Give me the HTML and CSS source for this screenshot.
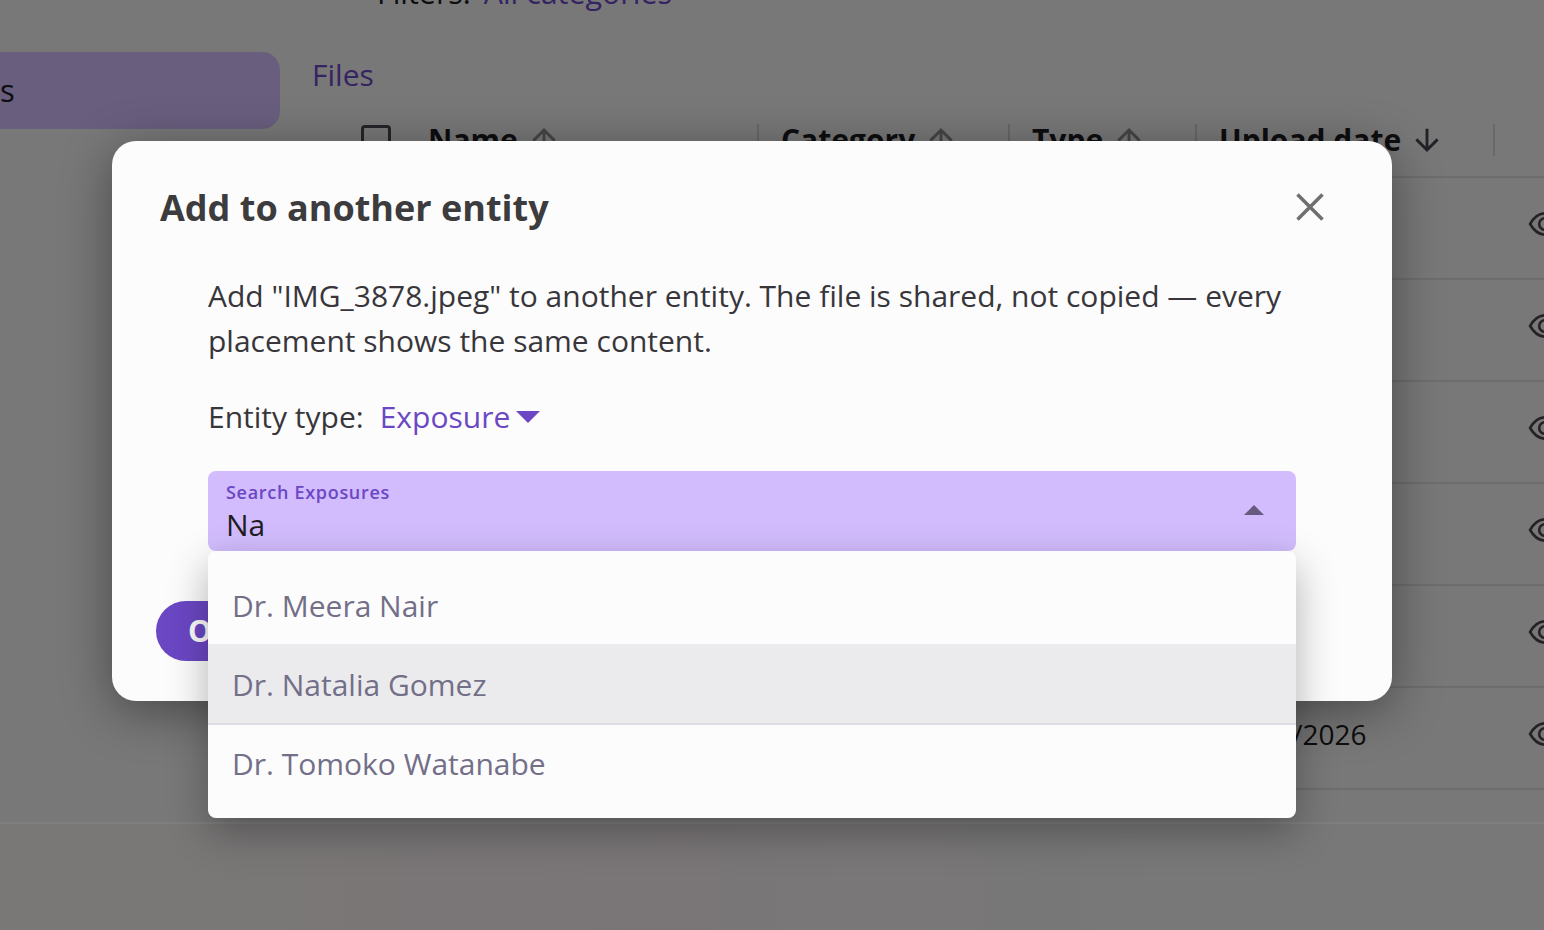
FILE: index.html
```html
<!DOCTYPE html>
<html lang="en">
<head>
<meta charset="utf-8">
<title>Add to another entity</title>
<link rel="stylesheet" href="styles.css">
</head>
<body>
<div class="page">
  <div class="filter-row">Filters: <span class="filter-value">All categories</span></div>
  <div class="main">
    <nav class="side"><div class="nav-item">s</div></nav>
    <section class="content">
      <h2 class="files">Files</h2>
      <div class="thead">
        <div class="cell c-check"><span class="checkbox"></span></div>
        <div class="cell c-name">Name <svg class="sort" viewBox="0 0 24 24"><path d="M12 21V4M3.500 12.500 12 4l8.500 8.500"/></svg></div>
        <div class="cell c-cat">Category <svg class="sort" viewBox="0 0 24 24"><path d="M12 21V4M3.500 12.500 12 4l8.500 8.500"/></svg></div>
        <div class="cell c-type">Type <svg class="sort" viewBox="0 0 24 24"><path d="M12 21V4M3.500 12.500 12 4l8.500 8.500"/></svg></div>
        <div class="cell c-date">Upload date <svg class="sort active" viewBox="0 0 24 24"><path d="M12 3v17M3.500 11.500 12 20l8.500-8.500"/></svg></div>
        <div class="cell c-act"></div>
      </div>
      <div class="row"><span class="date"></span><svg class="eye" viewBox="0 0 32 24"><path d="M2 12C6 5 11 2 16 2s10 3 14 10c-4 7-9 10-14 10S6 19 2 12Z"/><circle cx="16" cy="12" r="5.500"/></svg></div>
      <div class="row"><span class="date"></span><svg class="eye" viewBox="0 0 32 24"><path d="M2 12C6 5 11 2 16 2s10 3 14 10c-4 7-9 10-14 10S6 19 2 12Z"/><circle cx="16" cy="12" r="5.500"/></svg></div>
      <div class="row"><span class="date"></span><svg class="eye" viewBox="0 0 32 24"><path d="M2 12C6 5 11 2 16 2s10 3 14 10c-4 7-9 10-14 10S6 19 2 12Z"/><circle cx="16" cy="12" r="5.500"/></svg></div>
      <div class="row"><span class="date"></span><svg class="eye" viewBox="0 0 32 24"><path d="M2 12C6 5 11 2 16 2s10 3 14 10c-4 7-9 10-14 10S6 19 2 12Z"/><circle cx="16" cy="12" r="5.500"/></svg></div>
      <div class="row"><span class="date"></span><svg class="eye" viewBox="0 0 32 24"><path d="M2 12C6 5 11 2 16 2s10 3 14 10c-4 7-9 10-14 10S6 19 2 12Z"/><circle cx="16" cy="12" r="5.500"/></svg></div>
      <div class="row"><span class="date">02/11/2026</span><svg class="eye" viewBox="0 0 32 24"><path d="M2 12C6 5 11 2 16 2s10 3 14 10c-4 7-9 10-14 10S6 19 2 12Z"/><circle cx="16" cy="12" r="5.500"/></svg></div>
    </section>
  </div>
  <footer class="page-foot"></footer>
</div>

<div class="scrim"></div>

<div class="dialog" role="dialog" aria-label="Add to another entity">
  <header class="dialog-head">
    <h1 class="dialog-title">Add to another entity</h1>
    <svg class="close" viewBox="0 0 28 28"><path d="M1.500 1.500l25 25M26.500 1.500l-25 25"/></svg>
  </header>
  <div class="dialog-body">
    <p class="lead">Add "IMG_3878.jpeg" to another entity. The file is shared, not copied — every placement shows the same content.</p>
    <div class="type-row">
      <span class="type-label">Entity type:</span>
      <span class="type-value">Exposure</span>
      <svg class="type-caret" viewBox="0 0 24 12"><path d="M0 0h24L12 12Z"/></svg>
    </div>
    <div class="combo">
      <div class="field">
        <div class="field-text">
          <span class="field-label">Search Exposures</span>
          <span class="field-value">Na</span>
        </div>
        <svg class="field-caret" viewBox="0 0 20 10"><path d="M0 10 10 0l10 10Z"/></svg>
      </div>
      <ul class="menu">
        <li class="option">Dr. Meera Nair</li>
        <li class="option hovered">Dr. Natalia Gomez</li>
        <li class="option">Dr. Tomoko Watanabe</li>
      </ul>
    </div>
  </div>
  <footer class="dialog-foot"><button class="ok">OK</button></footer>
</div>
</body>
</html>
```
FILE: styles.css
```css
* { box-sizing: border-box; }
html, body { margin: 0; height: 100%; }
body {
  width: 1544px;
  height: 930px;
  overflow: hidden;
  position: relative;
  font-family: "Open Sans", "Noto Sans", sans-serif;
  color: #1c1b1f;
  background: #f0f0f0;
}
.page { height: 930px; overflow: hidden; }
.filter-row {
  height: 36px;
  margin-top: -25px;
  margin-bottom: 41px;
  padding-left: 377px;
  font-size: 30.4px;
  line-height: 36px;
  color: #1c1b1f;
}
.filter-value { color: #6b47c4; margin-left: 5px; }
.main { display: flex; }
.side { width: 280px; flex: none; }
.nav-item {
  height: 77px;
  background: #d2bcfd;
  border-radius: 0 18px 18px 0;
  font-size: 31px;
  line-height: 77px;
}
.content { flex: none; width: 1264px; padding-left: 32px; }
.files {
  margin: 0 0 20px;
  font-size: 30px;
  font-weight: 400;
  line-height: 46px;
  color: #6b47c4;
}
.thead { display: flex; height: 60px; padding-left: 49px; padding-bottom: 15px; align-items: center; border-bottom: 2px solid #dcdbdd; font-weight: 700; font-size: 30px; }
.cell { display: flex; align-items: center; gap: 11px; height: 32px; }
.c-check { width: 67px; }
.checkbox { width: 30px; height: 30px; border: 3px solid #4a4850; border-radius: 4px; }
.c-name { width: 329px; }
.c-cat { width: 251px; border-left: 2px solid #d0cfd2; padding-left: 22px; }
.c-type { width: 187px; border-left: 2px solid #d0cfd2; padding-left: 22px; }
.c-date { width: 300px; border-left: 2px solid #d0cfd2; padding-left: 22px; border-right: 2px solid #d0cfd2; }
.sort { width: 30px; height: 30px; fill: none; stroke: #8c8a90; stroke-width: 2.300; }
.sort.active { stroke: #49454f; }
.row { position: relative; display: flex; align-items: center; justify-content: flex-end; height: 102px; padding-bottom: 8px; border-bottom: 2px solid #dcdbdd; }
.date { position: absolute; left: 906px; top: 26px; font-size: 28px; line-height: 40px; }
.eye { width: 34px; height: 26px; margin-right: -18px; fill: none; stroke: #49454f; stroke-width: 2.500; flex: none; }
.page-foot {
  height: 120px;
  margin-top: 32px;
  border-top: 2px solid #ffffff;
  background: linear-gradient(90deg, #f5eeef 0%, #f4edee 45%, #f0f0f0 75%);
}

.scrim { position: absolute; inset: 0; background: rgba(0,0,0,.5); }

.dialog {
  position: absolute;
  left: 112px;
  top: 141px;
  width: 1280px;
  height: 560px;
  background: #fcfcfc;
  border-radius: 24px;
  box-shadow: 0 10px 50px rgba(0,0,0,.4);
  display: flex;
  flex-direction: column;
}
.dialog-head { display: flex; justify-content: space-between; align-items: center; padding: 39px 68px 0 48px; height: 92px; }
.dialog-title { margin: 3px 0 0; font-size: 36px; font-weight: 700; line-height: 52px; color: #3c3b3d; }
.close { width: 28px; height: 28px; fill: none; stroke: #6f6e70; stroke-width: 3.500; }
.dialog-body { padding: 40px 96px 0; flex: none; }
.lead { margin: 0; font-size: 30px; line-height: 45px; color: #38363a; }
.type-row { display: flex; align-items: center; margin-top: 31px; height: 46px; font-size: 30px; line-height: 46px; }
.type-label { color: #38363a; }
.type-value { color: #6b47c4; margin-left: 16px; }
.type-caret { width: 24px; height: 12px; margin-left: 6px; fill: #6b47c4; }
.combo { position: relative; margin-top: 31px; }
.field {
  height: 80px;
  background: #d2bcfd;
  border-radius: 8px;
  display: flex;
  justify-content: space-between;
  align-items: center;
  padding: 0 32px 0 18px;
}
.field-text { display: flex; flex-direction: column; }
.field-label { font-size: 18px; font-weight: 600; line-height: 26px; letter-spacing: .7px; color: #6b47c4; }
.field-value { font-size: 30px; line-height: 39px; color: #1f1d22; }
.field-caret { width: 20px; height: 10px; margin-bottom: 2px; fill: #665a7e; }
.menu {
  position: absolute;
  top: 80px;
  left: 0;
  right: 0;
  margin: 0;
  padding: 16px 0;
  list-style: none;
  background: #fcfcfc;
  border-radius: 8px;
  box-shadow: 0 14px 40px rgba(0,0,0,.3);
}
.option { height: 77px; padding: 0 24px; font-size: 30px; line-height: 78px; color: #736f88; }
.option.hovered { height: 81px; background: #ebebed; border-bottom: 2px solid #dfdee4; line-height: 81px; }
.dialog-foot { padding: 50px 44px 0; }
.ok {
  width: 160px;
  height: 60px;
  border: 0;
  border-radius: 30px;
  background: #6b47c4;
  color: #fcfcfc;
  font: 700 30px/60px "Open Sans", sans-serif;
  padding: 0;
  text-align: left;
  text-indent: 32px;
}
```
